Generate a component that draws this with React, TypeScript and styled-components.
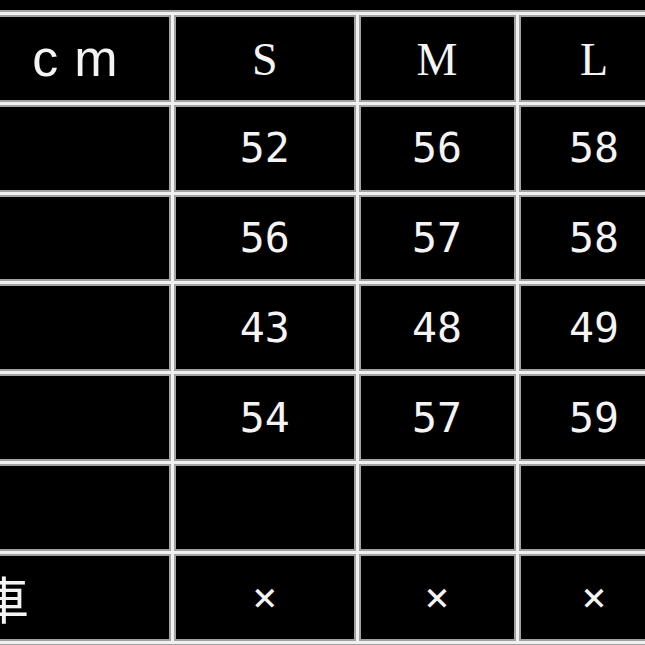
import React from "react";
import styled, { createGlobalStyle } from "styled-components";

const GlobalStyle = createGlobalStyle`
  html, body {
    margin: 0;
    padding: 0;
    background: #000;
    overflow: hidden;
  }
`;

type Kind = "unit" | "size" | "num" | "mark" | "label";

const sizes = ["S", "M", "L"];

const rows: string[][] = [
  ["", "52", "56", "58"],
  ["", "56", "57", "58"],
  ["", "43", "48", "49"],
  ["", "54", "57", "59"],
  ["", "", "", ""],
];

const Page = () => {
  return (
    <Viewport>
      <GlobalStyle />
      <Table>
        <Cell kind="unit">cm</Cell>
        {sizes.map((s) => (
          <Cell key={s} kind="size">
            {s}
          </Cell>
        ))}
        {rows.map((row, i) =>
          row.map((v, j) => (
            <Cell key={`${i}-${j}`} kind="num">
              {v}
            </Cell>
          ))
        )}
        <Cell kind="label">車</Cell>
        {sizes.map((s) => (
          <Cell key={`x-${s}`} kind="mark">
            ×
          </Cell>
        ))}
      </Table>
    </Viewport>
  );
};

const Viewport = styled.div`
  width: 645px;
  height: 645px;
  overflow: hidden;
  background: #000;
`;

const Table = styled.div`
  display: grid;
  grid-template-columns: 192px 181.5px 157px 151px;
  grid-auto-rows: 86.8px;
  gap: 3px;
  width: max-content;
  margin: 10px 0 0 -26px;
  padding: 3px;
  background: #f0f0f0;
  border: 2px solid #a2a2a2;
`;

const Cell = styled.div<{ kind: Kind }>`
  box-sizing: border-box;
  display: flex;
  align-items: center;
  justify-content: ${(p) => (p.kind === "label" ? "flex-start" : "center")};
  background: #000;
  border: 2px solid #a2a2a2;
  color: #f4f4f4;
  white-space: nowrap;
  overflow: hidden;
  padding-left: ${(p) => (p.kind === "unit" ? "16px" : "0")};
  padding-top: ${(p) => (p.kind === "size" ? "4px" : "0")};
  margin-left: ${(p) => (p.kind === "label" ? "-2px" : "0")};
  font-family: ${(p) =>
    p.kind === "unit"
      ? `"Liberation Sans", Arial, sans-serif`
      : p.kind === "size"
      ? `"Liberation Serif", "Times New Roman", serif`
      : p.kind === "label"
      ? `"Noto Sans CJK JP", sans-serif`
      : `"DejaVu Sans Mono", monospace`};
  font-size: ${(p) =>
    p.kind === "unit"
      ? "52px"
      : p.kind === "size"
      ? "46px"
      : p.kind === "label"
      ? "50px"
      : "41.5px"};
  letter-spacing: ${(p) => (p.kind === "unit" ? "16px" : "0")};
  font-weight: normal;
  line-height: 1;
`;

export default Page;
